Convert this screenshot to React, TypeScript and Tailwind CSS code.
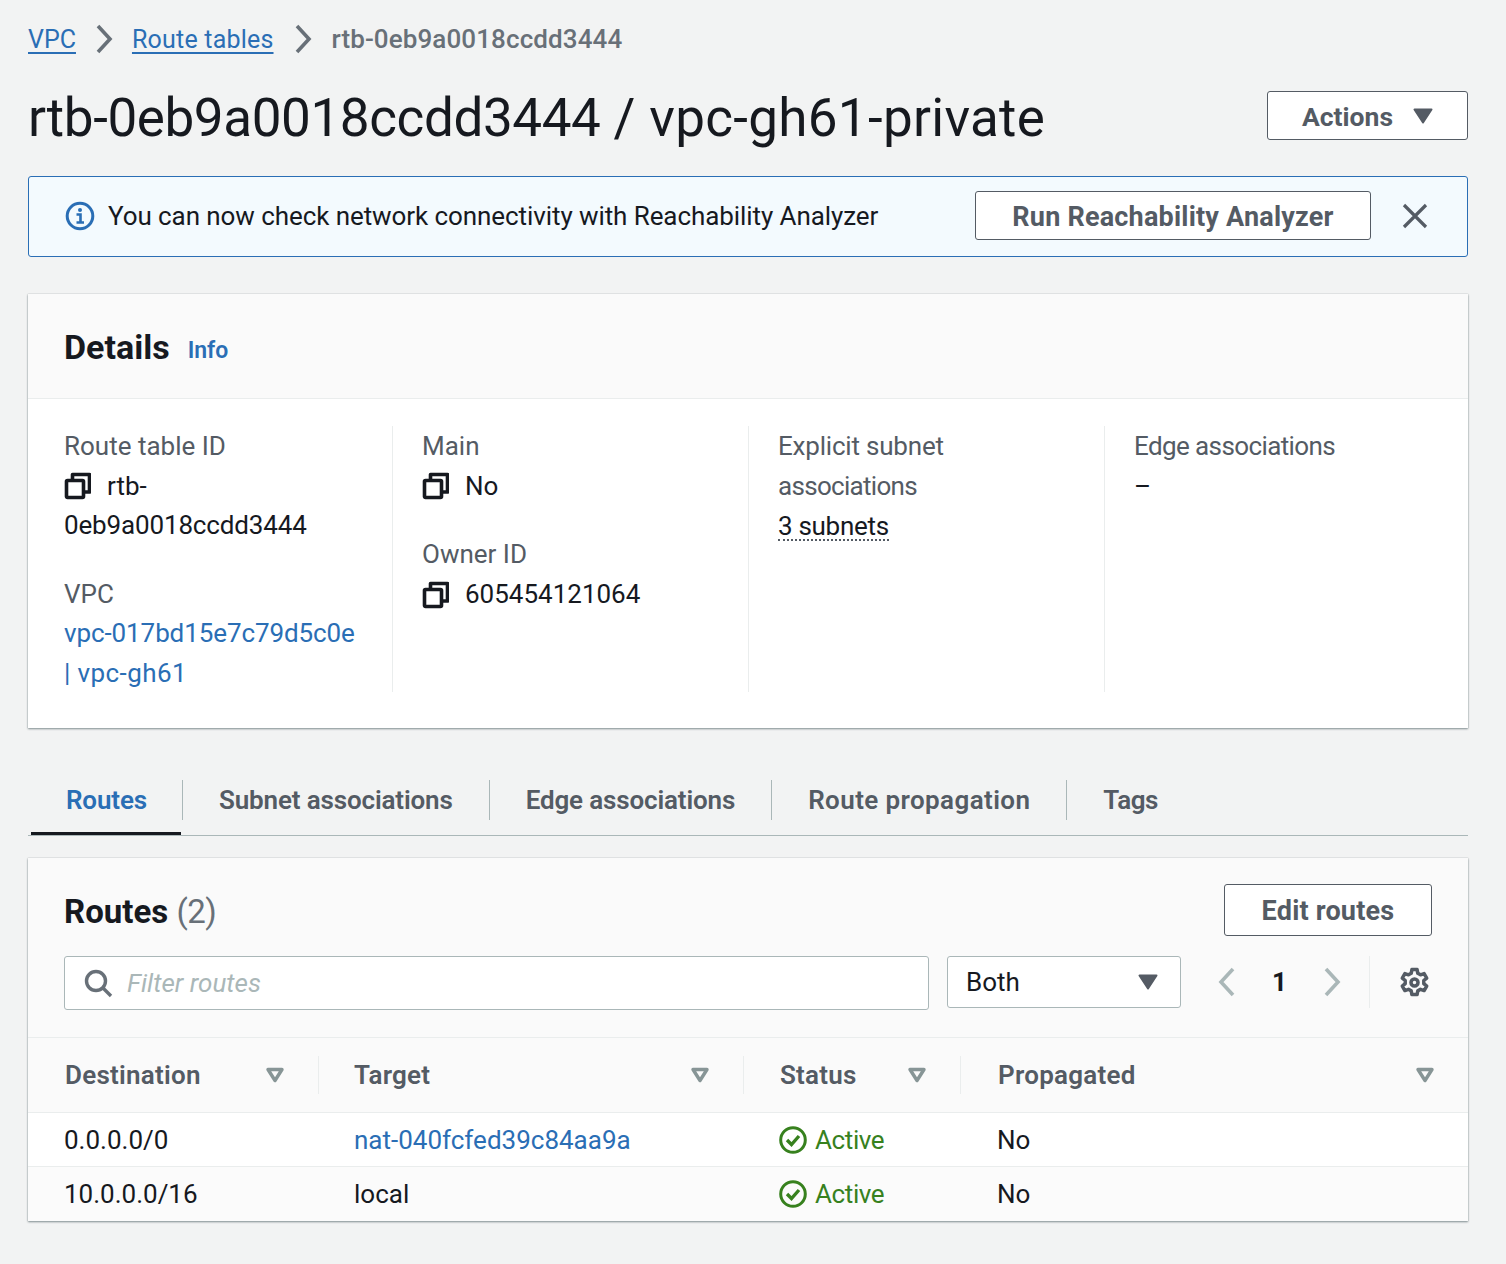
function Copy() {
  return (
    <svg width="28" height="28" viewBox="0 0 28 28" fill="none" stroke="#16191f" strokeWidth="3.6" strokeLinejoin="round" className="-ml-[1px] mr-[1px] shrink-0">
      <path d="M9.5 8V2.5h17V20H20.5" />
      <rect x="3.5" y="8.5" width="17" height="17" rx="1" />
    </svg>
  );
}

function Chevron({ left, color }: { left?: boolean; color: string }) {
  return (
    <svg width="20" height="30" viewBox="0 0 20 30" fill="none" stroke={color} strokeWidth="3.6" className="shrink-0">
      <path d={left ? "M16 2 4 15l12 13" : "M4 2l12 13L4 28"} />
    </svg>
  );
}

function Caret() {
  return (
    <svg width="20" height="16" viewBox="0 0 20 16" className="shrink-0" fill="#545b64">
      <path d="M1.5 1.5h17L10 14.5z" stroke="#545b64" strokeWidth="2" strokeLinejoin="round" />
    </svg>
  );
}

function SortIcon() {
  return (
    <svg width="20" height="16" viewBox="0 0 20 16" fill="none" stroke="#879596" strokeWidth="3.4" strokeLinejoin="round" className="shrink-0">
      <path d="M3 2.5h14L10 13.5z" />
    </svg>
  );
}

function ActiveIcon() {
  return (
    <svg width="28" height="28" viewBox="0 0 28 28" fill="none" stroke="#37811e" strokeWidth="3" className="shrink-0">
      <circle cx="14" cy="14" r="12.3" />
      <path d="M8 14l4.5 4.5L20 10" strokeWidth="3.4" />
    </svg>
  );
}

function Gear() {
  return (
    <svg width="31" height="31" viewBox="0 0 30 30" fill="none" stroke="#545b64" strokeWidth="3.4" strokeLinejoin="round">
      <path d="M12.5 2.5h5l.7 3.6 2.6 1.5 3.5-1.2 2.5 4.3-2.8 2.4v3l2.8 2.4-2.5 4.3-3.5-1.2-2.6 1.5-.7 3.6h-5l-.7-3.6-2.6-1.5-3.5 1.2-2.5-4.3 2.8-2.4v-3L3.2 10.7l2.5-4.3 3.5 1.2 2.6-1.5z" />
      <circle cx="15" cy="15" r="3.4" />
    </svg>
  );
}

function OutlineButton({ label, className }: { label: string; className: string }) {
  return (
    <div className={`flex items-center justify-center rounded-[3px] border border-[#545b64] bg-white pt-[2px] text-[27px] font-bold tracking-[0.2px] text-[#545b64] ${className}`}>
      {label}
    </div>
  );
}

function Label({ children, className }: { children: string; className?: string }) {
  return <div className={`text-[#545b64] ${className ?? ""}`}>{children}</div>;
}

function CopyValue({ value }: { value: string }) {
  return (
    <div className="flex items-center gap-[15px] text-[#16191f]">
      <Copy />
      <span>{value}</span>
    </div>
  );
}

const tabs = [
  { label: "Subnet associations", track: "tracking-[-0.15px]" },
  { label: "Edge associations", track: "tracking-[-0.15px]" },
  { label: "Route propagation", track: "tracking-[0.4px]" },
  { label: "Tags", track: "tracking-[-0.4px]" },
];

const headerCols = [
  { label: "Destination", w: "w-[291px]", pl: "pl-[37px]" },
  { label: "Target", w: "w-[425px]", pl: "pl-[35px]" },
  { label: "Status", w: "w-[217px]", pl: "pl-[36px]" },
  { label: "Propagated", w: "flex-1", pl: "pl-[37px]" },
];

const rows = [
  { dest: "0.0.0.0/0", target: "nat-040fcfed39c84aa9a", link: true, bg: "bg-white" },
  { dest: "10.0.0.0/16", target: "local", link: false, bg: "bg-[#fbfbfb]" },
];

export default function App() {
  return (
    <div className="h-[1264px] w-[1506px] overflow-hidden bg-[#f2f3f3] pl-[28px] pr-[38px] pt-[19px] font-['Roboto',sans-serif] text-[26px] leading-[40px] text-[#16191f]">
      <div className="flex h-[40px] items-center">
        <span className="pt-[1px] text-[25px] text-[#2a6eb5] underline underline-offset-4">VPC</span>
        <span className="mx-[18px]"><Chevron color="#687078" /></span>
        <span className="pt-[1px] text-[25px] tracking-[0.2px] text-[#2a6eb5] underline underline-offset-4">Route tables</span>
        <span className="mx-[19px]"><Chevron color="#687078" /></span>
        <span className="font-medium tracking-[0.1px] text-[#687078]">rtb-0eb9a0018ccdd3444</span>
      </div>

      <div className="mt-[32px] flex h-[49px] items-center justify-between">
        <h1 className="pt-[4px] text-[53px] leading-[60px] font-normal">
          <span className="tracking-[-0.4px]">rtb-0eb9a0018ccdd3444</span>{" "}
          <span className="tracking-[0.3px]">/ vpc-gh61-private</span>
        </h1>
        <div className="flex h-[49px] w-[201px] items-center justify-center gap-[20px] rounded-[3px] border border-[#545b64] bg-white text-[26.5px] font-bold text-[#545b64]">
          <span className="pt-[2px]">Actions</span>
          <Caret />
        </div>
      </div>

      <div className="mt-[36px] flex h-[81px] items-center rounded-[3px] border border-[#2a6eb5] bg-[#f3fafe] pb-[2px] pl-[36px] pr-[39px]">
        <svg width="30" height="30" viewBox="0 0 30 30" fill="none" className="shrink-0">
          <circle cx="15" cy="15" r="12.8" stroke="#2a6eb5" strokeWidth="3" />
          <circle cx="15" cy="9" r="2" fill="#2a6eb5" />
          <path d="M11.5 13.5H15.5V21M11.5 21.5H19" stroke="#2a6eb5" strokeWidth="2.6" />
        </svg>
        <span className="ml-[13px] tracking-[-0.08px]">You can now check network connectivity with Reachability Analyzer</span>
        <OutlineButton label="Run Reachability Analyzer" className="ml-auto h-[49px] w-[396px]" />
        <svg width="26" height="26" viewBox="0 0 26 26" stroke="#545b64" strokeWidth="3.2" className="ml-[31px]">
          <path d="M2 2l22 22M24 2 2 24" />
        </svg>
      </div>

      <div className="mt-[37px] h-[434px] bg-white shadow-[0_1px_2px_rgba(0,28,36,0.45),0_0_1px_rgba(0,28,36,0.25)]">
        <div className="flex h-[105px] items-center gap-[18px] border-b border-[#eaeded] bg-[#fafafa] pl-[36px]">
          <h2 className="mt-[2px] text-[34px] font-bold leading-[40px]">Details</h2>
          <span className="mt-[10px] text-[23px] font-semibold text-[#2a6eb5]">Info</span>
        </div>
        <div className="mt-[27px] grid h-[266px] grid-cols-[365px_356px_356px_1fr] grid-rows-[266px] leading-[39.6px]">
          <div className="border-r border-[#eaeded] pl-[36px] pt-[1px]">
            <Label>Route table ID</Label>
            <CopyValue value="rtb-" />
            <div className="tracking-[-0.15px]">0eb9a0018ccdd3444</div>
            <Label className="mt-[29px]">VPC</Label>
            <div className="whitespace-nowrap tracking-[-0.1px] text-[#2a6eb5]">vpc-017bd15e7c79d5c0e</div>
            <div className="tracking-[0.4px] text-[#2a6eb5]">| vpc-gh61</div>
          </div>
          <div className="border-r border-[#eaeded] pl-[29px] pt-[1px]">
            <Label>Main</Label>
            <CopyValue value="No" />
            <Label className="mt-[29px]">Owner ID</Label>
            <CopyValue value="605454121064" />
          </div>
          <div className="border-r border-[#eaeded] pl-[29px] pt-[1px]">
            <Label className="tracking-[-0.2px]">Explicit subnet</Label>
            <Label className="tracking-[-0.7px]">associations</Label>
            <span className="mt-[7px] inline-block border-b-2 border-dotted border-[#545b64] leading-[26px] tracking-[-0.3px]">3 subnets</span>
          </div>
          <div className="pl-[29px] pt-[1px]">
            <Label className="tracking-[-0.6px]">Edge associations</Label>
            <div>–</div>
          </div>
        </div>
      </div>

      <div className="mt-[52px] flex h-[56px] border-b border-[#aab7b8] font-semibold text-[#545b64]">
        <div className="relative ml-[3px] flex h-[40px] w-[152px] items-center border-r border-[#aab7b8] pl-[35px] tracking-[-0.15px] text-[#2a6eb5]">
          Routes
          <div className="absolute left-0 top-[52px] h-[3px] w-[150px] bg-[#16191f]" />
        </div>
        {tabs.map((t) => (
          <div key={t.label} className={`flex h-[40px] items-center border-r border-[#aab7b8] px-[36px] last:border-r-0 ${t.track}`}>
            {t.label}
          </div>
        ))}
      </div>

      <div className="mt-[22px] h-[363px] bg-white shadow-[0_1px_2px_rgba(0,28,36,0.45),0_0_1px_rgba(0,28,36,0.25)]">
        <div className="h-[180px] border-b border-[#eaeded] bg-[#fafafa] pl-[36px] pr-[36px]">
          <div className="flex items-start justify-between pt-[26px]">
            <h2 className="mt-[8px] text-[33px] font-bold leading-[40px]">
              Routes <span className="font-normal tracking-[-0.5px] text-[#687078]">(2)</span>
            </h2>
            <OutlineButton label="Edit routes" className="h-[52px] w-[208px]" />
          </div>
          <div className="mt-[20px] flex items-start">
            <div className="flex h-[54px] w-[865px] items-center rounded-[3px] border border-[#aab7b8] bg-white pl-[18px]">
              <svg width="30" height="30" viewBox="0 0 30 30" fill="none" stroke="#687078" strokeWidth="3.4">
                <circle cx="13" cy="13" r="9.5" />
                <path d="M20 20l8 8" />
              </svg>
              <span className="ml-[14px] italic text-[#aab7b8]">Filter routes</span>
            </div>
            <div className="ml-[18px] flex h-[52px] w-[234px] items-center justify-between rounded-[3px] border border-[#aab7b8] bg-white pl-[18px] pr-[22px]">
              Both
              <Caret />
            </div>
            <div className="ml-[36px] flex h-[52px] items-center">
              <Chevron left color="#aab7b8" />
              <span className="mx-[35px] font-bold">1</span>
              <Chevron color="#aab7b8" />
            </div>
            <div className="ml-[27px] flex h-[52px] items-center border-l border-[#eaeded] pl-[29px]">
              <Gear />
            </div>
          </div>
        </div>
        <div className="flex h-[75px] items-center border-b border-[#eaeded] bg-[#fafafa] font-semibold tracking-[0.25px] text-[#545b64]">
          {headerCols.map((c, i) => (
            <div key={c.label} className={`flex h-[38px] items-center justify-between pr-[33px] ${c.w} ${c.pl} ${i < 3 ? "border-r border-[#eaeded]" : ""}`}>
              <span>{c.label}</span>
              <SortIcon />
            </div>
          ))}
        </div>
        {rows.map((r) => (
          <div key={r.dest} className={`flex h-[54px] items-center border-b border-[#eaeded] last:border-b-0 ${r.bg}`}>
            <div className="w-[291px] pl-[36px]">{r.dest}</div>
            <div className={`w-[425px] pl-[35px] ${r.link ? "text-[#2a6eb5]" : ""}`}>{r.target}</div>
            <div className="flex w-[217px] items-center gap-[8px] pl-[35px] tracking-[-0.4px] text-[#37811e]">
              <ActiveIcon />
              Active
            </div>
            <div className="pl-[36px]">No</div>
          </div>
        ))}
      </div>
    </div>
  );
}
